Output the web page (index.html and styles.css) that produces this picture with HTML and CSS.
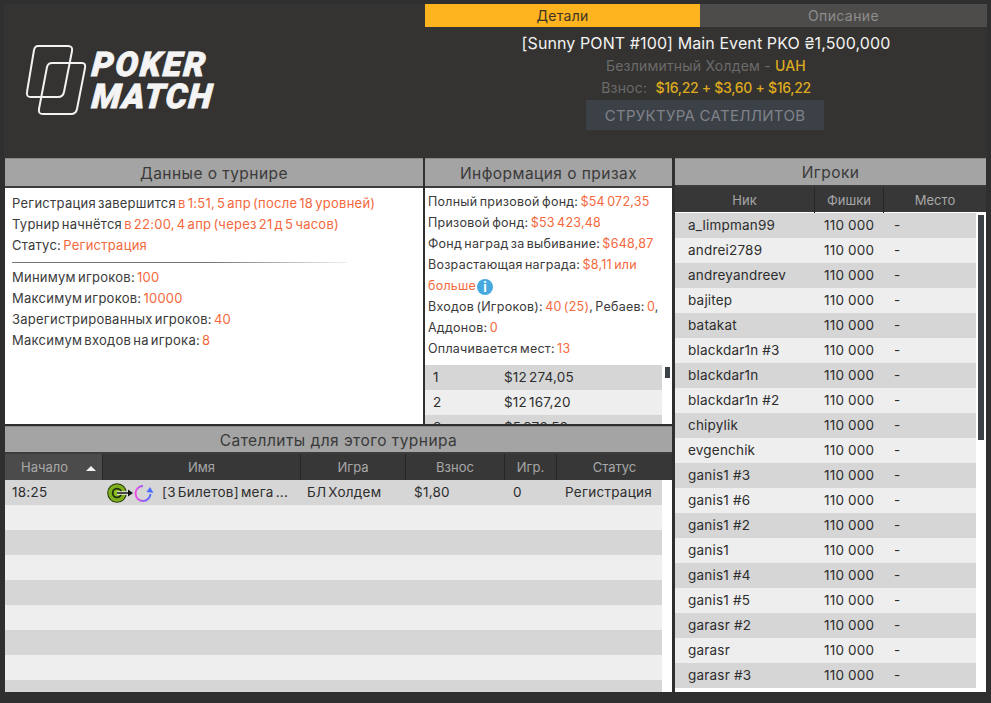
FILE: index.html
```html
<!DOCTYPE html>
<html lang="ru">
<head>
<meta charset="utf-8">
<title>Poker Match</title>
<link rel="stylesheet" href="styles.css">
</head>
<body>
<div class="app">
  <header class="top">
    <div class="logo">
      <svg class="logo-mark" width="64" height="72" viewBox="0 0 64 72" fill="none" stroke="#f2f2f2" stroke-width="2">
        <path d="M13 2H43Q48 2 47 7L39 48Q38 53 33 53H6Q1 53 2 48L9 6Q10 2 13 2Z"/>
        <path d="M27 19H57Q61 19 60 24L52 65Q51 70 46 70H18Q13 70 14 65L22 23Q23 19 27 19Z"/>
      </svg>
      <div class="logo-text"><span class="logo-poker">POKER</span><span class="logo-match">MATCH</span></div>
    </div>
    <div class="summary">
      <div class="tabs">
        <div class="tab tab-active">Детали</div>
        <div class="tab">Описание</div>
      </div>
      <div class="title">[Sunny PONT #100] Main Event PKO ₴1,500,000</div>
      <div class="sub">Безлимитный Холдем - <b class="gold">UAH</b></div>
      <div class="sub">Взнос: &nbsp;<b class="gold price">$16,22 + $3,60 + $16,22</b></div>
      <button class="sat-btn" type="button">СТРУКТУРА САТЕЛЛИТОВ</button>
    </div>
  </header>

  <main class="board">
    <div class="left">
      <section class="panel">
        <h2 class="panel-title">Данные о турнире</h2>
        <div class="panel-body tourney">
          <p>Регистрация завершится <em>в 1:51, 5 апр (после 18 уровней)</em></p>
          <p>Турнир начнётся <em>в 22:00, 4 апр (через 21 д 5 часов)</em></p>
          <p>Статус: <em>Регистрация</em></p>
          <hr class="fade">
          <p>Минимум игроков: <em>100</em></p>
          <p>Максимум игроков: <em>10000</em></p>
          <p>Зарегистрированных игроков: <em>40</em></p>
          <p>Максимум входов на игрока: <em>8</em></p>
        </div>
      </section>

      <section class="panel">
        <h2 class="panel-title">Информация о призах</h2>
        <div class="panel-body prizes">
          <div class="prize-text">
            <p>Полный призовой фонд: <em>$54 072,35</em></p>
            <p>Призовой фонд: <em>$53 423,48</em></p>
            <p>Фонд наград за выбивание: <em>$648,87</em></p>
            <p>Возрастающая награда: <em>$8,11 или больше</em><span class="info">i</span></p>
            <p>Входов (Игроков): <em>40 (25)</em>, Ребаев: <em>0</em>, Аддонов: <em>0</em></p>
            <p>Оплачивается мест: <em>13</em></p>
          </div>
          <div class="prize-table">
            <div class="prize-rows">
              <div class="row prize-row"><span class="p-place">1</span><span>$12 274,05</span></div>
              <div class="row prize-row"><span class="p-place">2</span><span>$12 167,20</span></div>
              <div class="row prize-row"><span class="p-place">3</span><span>$5 976,50</span></div>
            </div>
            <div class="scroll-track"><div class="thumb thumb-small"></div></div>
          </div>
        </div>
      </section>

      <section class="panel panel-wide">
        <h2 class="panel-title sat-title">Сателлиты для этого турнира</h2>
        <div class="thead sat-grid">
          <div class="th th-sorted">Начало <i class="sort-arrow"></i></div>
          <div class="th">Имя</div>
          <div class="th">Игра</div>
          <div class="th">Взнос</div>
          <div class="th">Игр.</div>
          <div class="th">Статус</div>
        </div>
        <div class="sat-body">
          <div class="row sat-grid sat-row">
            <span class="c-start">18:25</span>
            <span class="c-name">
              <svg class="sat-icons" width="47" height="20" viewBox="0 0 47 20" fill="none">
                <defs>
                  <linearGradient id="spin" x1="0" y1="0" x2="1" y2="0">
                    <stop offset="0" stop-color="#f04be8"/>
                    <stop offset="1" stop-color="#4f6cff"/>
                  </linearGradient>
                </defs>
                <circle cx="10" cy="10" r="9.800" fill="#26330c"/>
                <circle cx="10" cy="10" r="8.800" fill="#7db01c"/>
                <circle cx="10" cy="10" r="5.200" fill="#1d2a0a"/>
                <circle cx="10" cy="10" r="3.400" fill="#8dbf25"/>
                <path d="M10 10H24" stroke="#ececec" stroke-width="3.500"/>
                <path d="M10 10H24" stroke="#111" stroke-width="1.500"/>
                <path d="M21 6.500L26 10L21 13.500Z" fill="#111"/>
                <path d="M36 3A7.500 7.500 0 1 0 43.500 11" stroke="url(#spin)" stroke-width="2"/>
                <path d="M39.500 9L43 4L46.500 10Z" fill="#4f6cff"/>
              </svg>
              <span class="sat-name">[3 Билетов] мега ...</span>
            </span>
            <span>БЛ Холдем</span>
            <span class="c-fee">$1,80</span>
            <span class="c-num">0</span>
            <span class="c-status">Регистрация</span>
          </div>
          <div class="row sat-row"></div><div class="row sat-row"></div><div class="row sat-row"></div>
          <div class="row sat-row"></div><div class="row sat-row"></div><div class="row sat-row"></div>
          <div class="row sat-row"></div><div class="row sat-row"></div>
        </div>
      </section>
    </div>

    <section class="panel players">
      <h2 class="panel-title">Игроки</h2>
      <div class="thead player-grid">
        <div class="th">Ник</div>
        <div class="th">Фишки</div>
        <div class="th">Место</div>
      </div>
      <div class="player-body">
        <div class="player-rows">
          <div class="row player-grid player-row"><span>a_limpman99</span><span>110 000</span><span>-</span></div>
          <div class="row player-grid player-row"><span>andrei2789</span><span>110 000</span><span>-</span></div>
          <div class="row player-grid player-row"><span>andreyandreev</span><span>110 000</span><span>-</span></div>
          <div class="row player-grid player-row"><span>bajitep</span><span>110 000</span><span>-</span></div>
          <div class="row player-grid player-row"><span>batakat</span><span>110 000</span><span>-</span></div>
          <div class="row player-grid player-row"><span>blackdar1n #3</span><span>110 000</span><span>-</span></div>
          <div class="row player-grid player-row"><span>blackdar1n</span><span>110 000</span><span>-</span></div>
          <div class="row player-grid player-row"><span>blackdar1n #2</span><span>110 000</span><span>-</span></div>
          <div class="row player-grid player-row"><span>chipylik</span><span>110 000</span><span>-</span></div>
          <div class="row player-grid player-row"><span>evgenchik</span><span>110 000</span><span>-</span></div>
          <div class="row player-grid player-row"><span>ganis1 #3</span><span>110 000</span><span>-</span></div>
          <div class="row player-grid player-row"><span>ganis1 #6</span><span>110 000</span><span>-</span></div>
          <div class="row player-grid player-row"><span>ganis1 #2</span><span>110 000</span><span>-</span></div>
          <div class="row player-grid player-row"><span>ganis1</span><span>110 000</span><span>-</span></div>
          <div class="row player-grid player-row"><span>ganis1 #4</span><span>110 000</span><span>-</span></div>
          <div class="row player-grid player-row"><span>ganis1 #5</span><span>110 000</span><span>-</span></div>
          <div class="row player-grid player-row"><span>garasr #2</span><span>110 000</span><span>-</span></div>
          <div class="row player-grid player-row"><span>garasr</span><span>110 000</span><span>-</span></div>
          <div class="row player-grid player-row"><span>garasr #3</span><span>110 000</span><span>-</span></div>
        </div>
        <div class="scroll-track player-track"><div class="thumb thumb-tall"></div></div>
      </div>
    </section>
  </main>
</div>
</body>
</html>
```

FILE: styles.css
```css
* { box-sizing: border-box; }
html, body { margin: 0; padding: 0; }
body {
  width: 991px;
  height: 703px;
  overflow: hidden;
  background: #2f2f2f;
  font-family: Inter, "Noto Sans", sans-serif;
  font-size: 13px;
  color: #3a3a3a;
}
.app {
  height: 703px;
  padding: 4px 4px 11px 4px;
  display: flex;
  flex-direction: column;
}
.top {
  height: 154px;
  background: #343331;
  display: flex;
}
.logo {
  width: 421px;
  padding: 40px 0 0 21px;
  display: flex;
  align-items: flex-start;
  gap: 3px;
}
.logo-mark { flex: none; }
.logo-text {
  display: flex;
  flex-direction: column;
  margin-top: 4px;
  font-family: Roboto, sans-serif;
  font-weight: 900;
  font-style: italic;
  font-size: 34px;
  line-height: 32px;
  color: #f4f4f4;
  -webkit-text-stroke: 0.8px #f4f4f4;
}
.logo-poker { letter-spacing: 2px; transform: skewX(-5deg); }
.logo-match { letter-spacing: 1.300px; transform: skewX(-5deg); }
.summary {
  flex: 1;
  display: flex;
  flex-direction: column;
  align-items: center;
}
.tabs { width: 100%; display: flex; height: 23px; }
.tab {
  flex: 287;
  background: #4d4c4a;
  color: #8d8d8d;
  font-size: 14px;
  line-height: 23px;
  text-align: center;
  letter-spacing: 0.4px;
}
.tab-active { flex: 275; background: #fdb41f; color: #3b3324; letter-spacing: 0.3px; }
.title {
  margin-top: 6px;
  font-size: 16px;
  line-height: 21px;
  letter-spacing: 0.1px;
  color: #f2f2f2;
}
.sub {
  margin-top: 2px;
  line-height: 20px;
  font-size: 14px;
  letter-spacing: 0.2px;
  color: #6b6b6b;
}
.gold { font-weight: 500; color: #ddaa1f; }
.price { letter-spacing: -0.3px; }
.sat-btn {
  width: 238px;
  height: 30px;
  margin: 2px 2px 0 0;
  border: 0;
  background: #3c4047;
  color: #80838a;
  font: 15px Inter, sans-serif;
  letter-spacing: 0.3px;
}
.board { flex: 1; display: flex; gap: 3px; min-height: 0; padding: 0 1px; }
.left {
  width: 667px;
  display: grid;
  grid-template-columns: 418px 247px;
  grid-template-rows: 266px 266px;
  gap: 2px;
}
.panel {
  background: #fff;
  display: flex;
  flex-direction: column;
  overflow: hidden;
  min-height: 0;
}
.panel-wide { grid-column: 1 / 3; }
.panel-title {
  margin: 0;
  height: 30px;
  background: #a4a4a4;
  border-top: 1px solid #8a8a8a;
  border-bottom: 2px solid #3c3c3c;
  color: #3a3a3a;
  font-size: 15.500px;
  font-weight: 400;
  line-height: 29px;
  text-align: center;
  letter-spacing: 0.45px;
}
.sat-title { height: 28px; line-height: 27px; flex: none; }
.panel-body { flex: 1; min-height: 0; }
p { margin: 0; }
em { font-style: normal; color: #f4683c; }
.tourney {
  padding: 5px 7px;
  font-size: 13px;
  line-height: 21px;
  letter-spacing: 0.25px;
  word-spacing: -1.800px;
}
.fade {
  width: 335px;
  height: 1px;
  margin: 6px 0 4px;
  border: 0;
  background: linear-gradient(90deg, #777, #777 60%, #eee);
}
.prizes { display: flex; flex-direction: column; }
.prize-text {
  padding: 3px 0 0 3px;
  font-size: 12.500px;
  line-height: 21px;
  letter-spacing: 0.25px;
  word-spacing: -1.500px;
  height: 177px;
  flex: none;
}
.info {
  display: inline-block;
  width: 16px;
  height: 16px;
  margin-left: 1px;
  border-radius: 50%;
  background: #46a9e0;
  color: #fff;
  font-size: 13px;
  font-weight: 700;
  line-height: 16px;
  text-align: center;
  vertical-align: -2px;
}
.prize-table { flex: 1; display: flex; min-height: 0; overflow: hidden; }
.prize-rows { width: 237px; flex: none; }
.row {
  height: 25px;
  line-height: 25px;
  color: #2d2d2d;
  font-size: 13px;
  background: #eeeeee;
}
.row:nth-child(odd) { background: #d6d6d6; }
.prize-row { display: flex; padding-left: 8px; font-size: 13.500px; word-spacing: -2px; letter-spacing: 0.2px; }
.p-place { width: 71px; }
.scroll-track { flex: 1; padding: 2px 0 0 3px; }
.thumb { background: #3c4047; }
.thumb-small { width: 5px; height: 11px; }
.thumb-tall { width: 6px; height: 225px; }
.thead { background: #373737; height: 26px; flex: none; }
.th {
  color: #a8a8a8;
  font-size: 13px;
  line-height: 26px;
  text-align: center;
  border-right: 1px solid #262626;
}
.th:last-child { border-right: 0; }
.th-sorted { background: #4b4b4b; text-align: left; padding-left: 16px; }
.sort-arrow {
  display: inline-block;
  width: 0;
  height: 0;
  margin-left: 14px;
  border-left: 5px solid transparent;
  border-right: 5px solid transparent;
  border-bottom: 5px solid #f2f2f2;
  vertical-align: 1px;
}
.sat-grid { display: grid; grid-template-columns: 98px 198px 105px 99px 52px 115px; }
.sat-body { flex: 1; min-height: 0; overflow: hidden; width: 657px; }
.sat-row { font-size: 13.500px; letter-spacing: 0.25px; word-spacing: -2px; }
.sat-row.sat-grid { grid-template-columns: 98px 198px 105px 99px 52px 105px; align-items: center; }
.c-start { padding-left: 7px; }
.c-name { display: flex; align-items: center; padding-left: 4px; gap: 8px; }
.sat-icons { flex: none; }
.sat-name { white-space: nowrap; }
.sat-row > span:nth-child(3) { padding-left: 6px; white-space: nowrap; }
.c-fee { padding-left: 8px; }
.c-num { padding-left: 8px; }
.c-status { padding-left: 8px; white-space: nowrap; }
.players { flex: 1; }
.players .panel-title { flex: none; height: 29px; line-height: 28px; }
.players .thead { height: 26px; border-bottom: 1px solid #fff; }
.player-grid { display: grid; grid-template-columns: 140px 69px 1fr; }
.players .thead.player-grid { grid-template-columns: 140px 69px 1fr; }
.player-body { flex: 1; display: flex; min-height: 0; overflow: hidden; }
.player-rows { width: 301px; flex: none; }
.player-row { padding-left: 13px; grid-template-columns: 136px 70px 1fr; letter-spacing: 0.2px; font-size: 13.500px; }
.player-track { padding: 2px 0 0 2px; }
```
